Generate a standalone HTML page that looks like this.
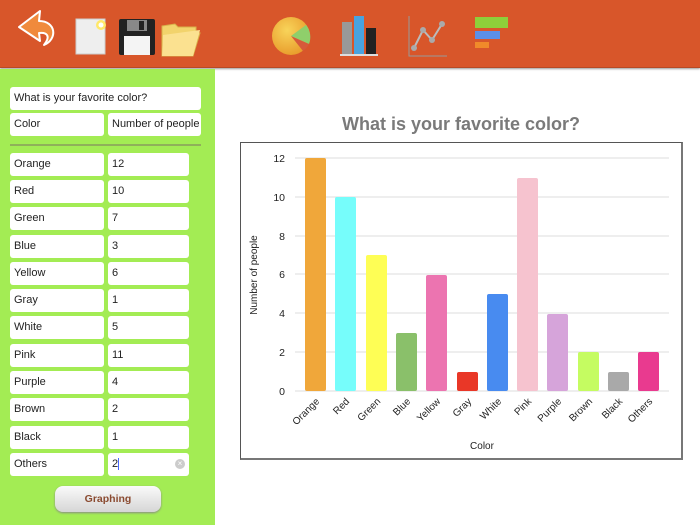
<!DOCTYPE html>
<html><head><meta charset="utf-8"><style>
*{margin:0;padding:0;box-sizing:border-box}
body{width:700px;height:525px;overflow:hidden;background:#fff;font-family:"Liberation Sans",sans-serif;position:relative}
#tb{position:absolute;left:0;top:0;width:700px;height:68px;background:#d8562a;border-bottom:1px solid #b84a25;box-shadow:0 1px 2px #999}
#lp{position:absolute;left:0;top:69px;width:215px;height:456px;background:#a3ec54}
.f{position:absolute;background:#fff;border-radius:3px;font-size:11px;color:#222;padding-left:4px;line-height:23px;height:23px}
.sep{position:absolute;left:10px;top:144px;width:191px;height:2px;background:#8fb05a}
#btn{position:absolute;left:55px;top:486px;width:106px;height:26px;border-radius:8px;background:linear-gradient(#fafafa,#d6d6d6);box-shadow:0 1px 2px #888;text-align:center;font-size:10.5px;font-weight:bold;color:#8a4a30;line-height:26px}
#title{position:absolute;left:240px;width:442px;top:114px;text-align:center;font-size:18px;font-weight:bold;color:#7a7a7a}
#ch{position:absolute;left:240px;top:142px;width:443px;height:318px;border:1px solid #555;border-right:2px solid #777;border-bottom:2px solid #777}
</style></head><body>
<div id="tb">
<svg width="700" height="68">
<defs><radialGradient id="pg" cx="0.4" cy="0.35" r="0.7"><stop offset="0" stop-color="#f8d45a"/><stop offset="1" stop-color="#e89a2a"/></radialGradient></defs>
<path d="M40 11 L19 27 L40 41 L39 33 C47 32 51 36 44 45 C58 39 56 21 39 21 Z" fill="#f08a3c" stroke="#fff" stroke-width="2" stroke-linejoin="round"/>
<rect x="76" y="19" width="29" height="35" fill="#eee" stroke="#ccc"/>
<circle cx="101" cy="25" r="5" fill="#ffe86a"/><circle cx="101" cy="25" r="2.5" fill="#fff"/>
<rect x="119" y="19" width="36" height="36" rx="2" fill="#222"/>
<rect x="127" y="20" width="20" height="11" fill="#888"/><rect x="139" y="21" width="5" height="9" fill="#222"/>
<rect x="124" y="36" width="26" height="19" fill="#f4f4f4"/>
<path d="M162 26 L175 24 L178 27 L196 27 L196 33 L200 33 L193 56 L162 56 Z" fill="#f2d36c" stroke="#d8b04a"/>
<path d="M163 35 L200 30 L193 56 L162 56 Z" fill="#fbe190"/>
<circle cx="291" cy="36" r="19" fill="url(#pg)"/>
<path d="M291 36 L306 25 A19 19 0 0 1 309 44 Z" fill="#8fcf6b"/>
<path d="M291 36 L309 44 A19 19 0 0 1 303 51 Z" fill="#d65a3a"/>
<rect x="342" y="22" width="10" height="32" fill="#999"/><rect x="354" y="16" width="10" height="38" fill="#49a3e0"/><rect x="366" y="28" width="10" height="26" fill="#222"/>
<rect x="340" y="54" width="38" height="2" fill="#ddd"/>
<path d="M409 16 L409 56 L447 56" stroke="#999" fill="none"/>
<path d="M414 48 L423 30 L432 40 L442 24" stroke="#bbb" stroke-width="2" fill="none"/>
<circle cx="414" cy="48" r="3" fill="#aaa"/><circle cx="423" cy="30" r="3" fill="#aaa"/><circle cx="432" cy="40" r="3" fill="#aaa"/><circle cx="442" cy="24" r="3" fill="#aaa"/>
<rect x="475" y="17" width="33" height="11" fill="#8ecf3a"/><rect x="475" y="31" width="25" height="8" fill="#5b8fe6"/><rect x="475" y="42" width="14" height="6" fill="#f08a2a"/>
</svg></div>
<div id="lp"></div>
<div class="f" style="left:10px;top:87px;width:191px">What is your favorite color?</div>
<div class="f" style="left:10px;top:113px;width:94px">Color</div>
<div class="f" style="left:108px;top:113px;width:93px">Number of people</div>
<div class="sep"></div>
<div class="f" style="left:10px;top:153px;width:94px">Orange</div><div class="f" style="left:108px;top:153px;width:81px">12</div>
<div class="f" style="left:10px;top:180px;width:94px">Red</div><div class="f" style="left:108px;top:180px;width:81px">10</div>
<div class="f" style="left:10px;top:207px;width:94px">Green</div><div class="f" style="left:108px;top:207px;width:81px">7</div>
<div class="f" style="left:10px;top:235px;width:94px">Blue</div><div class="f" style="left:108px;top:235px;width:81px">3</div>
<div class="f" style="left:10px;top:262px;width:94px">Yellow</div><div class="f" style="left:108px;top:262px;width:81px">6</div>
<div class="f" style="left:10px;top:289px;width:94px">Gray</div><div class="f" style="left:108px;top:289px;width:81px">1</div>
<div class="f" style="left:10px;top:316px;width:94px">White</div><div class="f" style="left:108px;top:316px;width:81px">5</div>
<div class="f" style="left:10px;top:344px;width:94px">Pink</div><div class="f" style="left:108px;top:344px;width:81px">11</div>
<div class="f" style="left:10px;top:371px;width:94px">Purple</div><div class="f" style="left:108px;top:371px;width:81px">4</div>
<div class="f" style="left:10px;top:398px;width:94px">Brown</div><div class="f" style="left:108px;top:398px;width:81px">2</div>
<div class="f" style="left:10px;top:426px;width:94px">Black</div><div class="f" style="left:108px;top:426px;width:81px">1</div>
<div class="f" style="left:10px;top:453px;width:94px">Others</div><div class="f" style="left:108px;top:453px;width:81px">2<span style="display:inline-block;width:1px;height:12px;background:#46f;vertical-align:middle"></span><span style="position:absolute;right:4px;top:6px;width:10px;height:10px;border-radius:50%;background:#ccc;color:#fff;font-size:8px;line-height:10px;text-align:center">×</span></div>
<div id="btn">Graphing</div>
<div id="title">What is your favorite color?</div>
<div id="ch"></div>
<svg width="700" height="525" style="position:absolute;left:0;top:0" font-family="Liberation Sans" font-size="10.5" fill="#222">
<g stroke="#ddd" stroke-width="1">
<line x1="295" x2="669" y1="158" y2="158"/><line x1="295" x2="669" y1="197" y2="197"/><line x1="295" x2="669" y1="236" y2="236"/><line x1="295" x2="669" y1="274" y2="274"/><line x1="295" x2="669" y1="313" y2="313"/><line x1="295" x2="669" y1="352" y2="352"/><line x1="295" x2="669" y1="391" y2="391"/>
</g>
<g text-anchor="end"><text x="285" y="162">12</text><text x="285" y="201">10</text><text x="285" y="240">8</text><text x="285" y="278">6</text><text x="285" y="317">4</text><text x="285" y="356">2</text><text x="285" y="395">0</text></g>
<text transform="translate(257,275) rotate(-90)" text-anchor="middle" font-size="10">Number of people</text>
<text x="482" y="449" text-anchor="middle" font-size="10">Color</text>
<g>
<rect x="305" y="158" width="21" height="233" rx="2" fill="#f0a73a"/>
<rect x="335" y="197" width="21" height="194" rx="2" fill="#76fdfb"/>
<rect x="366" y="255" width="21" height="136" rx="2" fill="#fefe55"/>
<rect x="396" y="333" width="21" height="58" rx="2" fill="#8ac06a"/>
<rect x="426" y="275" width="21" height="116" rx="2" fill="#ec74b0"/>
<rect x="457" y="372" width="21" height="19" rx="2" fill="#e93727"/>
<rect x="487" y="294" width="21" height="97" rx="2" fill="#488bf0"/>
<rect x="517" y="178" width="21" height="213" rx="2" fill="#f6c3cf"/>
<rect x="547" y="314" width="21" height="77" rx="2" fill="#d6a4da"/>
<rect x="578" y="352" width="21" height="39" rx="2" fill="#c5fc61"/>
<rect x="608" y="372" width="21" height="19" rx="2" fill="#a9a9a9"/>
<rect x="638" y="352" width="21" height="39" rx="2" fill="#e93a8f"/>
</g>
<g text-anchor="end" font-size="10">
<text transform="translate(320,402) rotate(-45)">Orange</text>
<text transform="translate(350,402) rotate(-45)">Red</text>
<text transform="translate(381,402) rotate(-45)">Green</text>
<text transform="translate(411,402) rotate(-45)">Blue</text>
<text transform="translate(441,402) rotate(-45)">Yellow</text>
<text transform="translate(472,402) rotate(-45)">Gray</text>
<text transform="translate(502,402) rotate(-45)">White</text>
<text transform="translate(532,402) rotate(-45)">Pink</text>
<text transform="translate(562,402) rotate(-45)">Purple</text>
<text transform="translate(593,402) rotate(-45)">Brown</text>
<text transform="translate(623,402) rotate(-45)">Black</text>
<text transform="translate(653,402) rotate(-45)">Others</text>
</g>
</svg>
</body></html>
